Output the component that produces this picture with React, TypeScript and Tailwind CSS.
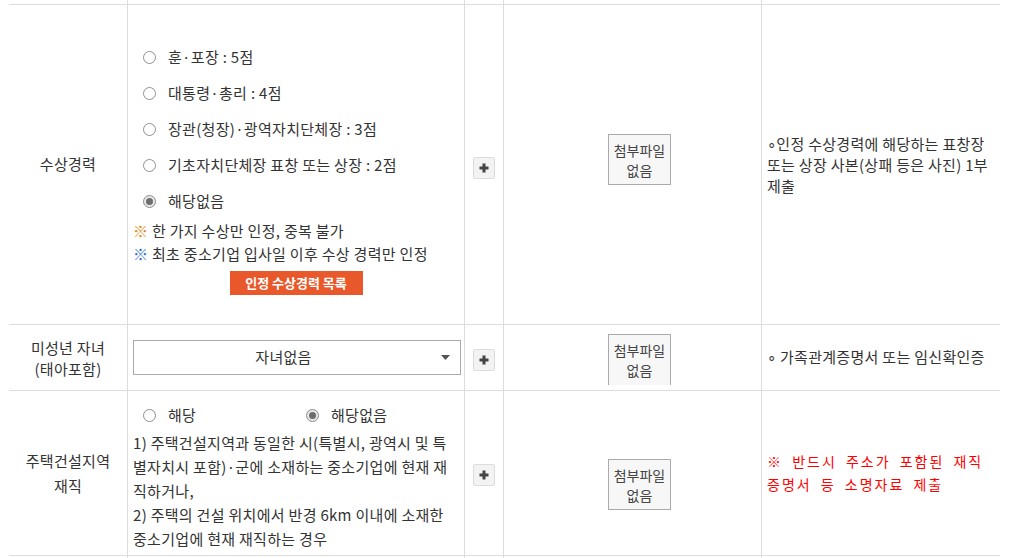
import clsx from "clsx";

const cols = "grid grid-cols-[119px_337px_39px_258px_238px]";
const cell = "border-r border-[#dddddd]";

function Radio({ checked, label, className }: { checked?: boolean; label: string; className?: string }) {
  return (
    <label className={clsx("flex items-center", className)}>
      <span
        className={clsx(
          "flex h-[13px] w-[13px] shrink-0 items-center justify-center rounded-full border",
          checked ? "border-[#8c8c8c] bg-[#e8e8e8]" : "border-[#8f8f8f] bg-white",
        )}
      >
        {checked ? <span className="h-[7px] w-[7px] rounded-full bg-[#6e6e6e]" /> : null}
      </span>
      <span className="ml-[12px]">{label}</span>
    </label>
  );
}

function PlusButton() {
  return (
    <button
      type="button"
      className="ml-[8px] flex h-[22px] w-[22px] items-center justify-center rounded-[2px] border border-[#dcdcdc] bg-[#f3f3f3]"
    >
      <svg width="10" height="10" viewBox="0 0 10 10" aria-hidden>
        <rect x="3.5" y="0.5" width="3" height="9" fill="#444" />
        <rect x="0.5" y="3.5" width="9" height="3" fill="#444" />
      </svg>
    </button>
  );
}

function NoFile({ open }: { open?: boolean }) {
  return (
    <div
      className={clsx(
        "ml-[104px] flex h-[51px] w-[63px] flex-col items-center justify-center border border-[#aaaaaa] bg-[#f7f7f7] text-[14px] leading-[20px] tracking-normal text-[#444]",
        open && "border-b-0",
      )}
    >
      <span>첨부파일</span>
      <span>없음</span>
    </div>
  );
}

function Row({ className, children }: { className: string; children: React.ReactNode }) {
  return <div className={clsx(cols, "border-b border-[#dddddd]", className)}>{children}</div>;
}

export default function App() {
  return (
    <div className="min-h-screen bg-white pl-[9px] font-[family-name:'Noto_Sans_CJK_KR','Noto_Sans',sans-serif] text-[15px] tracking-[0.3px] text-[#333]">
      <div className="w-[991px]">
        <Row className="h-[5px]">
          <div className={cell} />
          <div className={cell} />
          <div className={cell} />
          <div className={cell} />
          <div />
        </Row>

        {/* 수상경력 */}
        <Row className="h-[320px]">
          <div className={clsx(cell, "flex items-center justify-center")}>수상경력</div>
          <div className={clsx(cell, "flex flex-col pl-[5px] pt-[34px]")}>
            <div className="flex flex-col pl-[10px]">
              <Radio className="h-[36px]" label="훈·포장 : 5점" />
              <Radio className="h-[36px]" label="대통령·총리 : 4점" />
              <Radio className="h-[36px]" label="장관(청장)·광역자치단체장 : 3점" />
              <Radio className="h-[36px]" label="기초자치단체장 표창 또는 상장 : 2점" />
              <Radio className="h-[36px]" checked label="해당없음" />
            </div>
            <p className="leading-[23px]">
              <span className="text-[#e08a12]">※</span> 한 가지 수상만 인정, 중복 불가
            </p>
            <p className="leading-[23px]">
              <span className="text-[#2b6fd6]">※</span> 최초 중소기업 입사일 이후 수상 경력만 인정
            </p>
            <div className="mt-[6px] flex justify-center pr-[5px]">
              <button
                type="button"
                className="h-[24px] w-[133px] bg-[#e8582a] text-[13px] font-bold tracking-normal text-white"
              >
                인정 수상경력 목록
              </button>
            </div>
          </div>
          <div className={clsx(cell, "pt-[152px]")}>
            <PlusButton />
          </div>
          <div className={clsx(cell, "pt-[129px]")}>
            <NoFile />
          </div>
          <div className="flex items-center pl-[5px] pr-[6px] leading-[21px]">
            <p>∘인정 수상경력에 해당하는 표창장 또는 상장 사본(상패 등은 사진) 1부 제출</p>
          </div>
        </Row>

        {/* 미성년 자녀 */}
        <Row className="h-[66px]">
          <div className={clsx(cell, "flex flex-col items-center justify-center text-center leading-[21px]")}>
            <span>미성년 자녀</span>
            <span>(태아포함)</span>
          </div>
          <div className={clsx(cell, "flex items-center pl-[5px]")}>
            <div className="flex h-[35px] w-[328px] items-center border border-[#aaaaaa] bg-white">
              <span className="flex-1 pr-[8px] text-center">자녀없음</span>
              <svg className="mr-[10px]" width="9" height="5" viewBox="0 0 9 5" aria-hidden>
                <path d="M0 0h9L4.5 5z" fill="#555" />
              </svg>
            </div>
          </div>
          <div className={clsx(cell, "pt-[24px]")}>
            <PlusButton />
          </div>
          <div className={clsx(cell, "pt-[9px]")}>
            <NoFile open />
          </div>
          <div className="flex items-center pl-[5px]">
            <p>∘ 가족관계증명서 또는 임신확인증</p>
          </div>
        </Row>

        {/* 주택건설지역 재직 */}
        <Row className="h-[165px]">
          <div className={clsx(cell, "flex flex-col items-center justify-center text-center leading-[25px]")}>
            <span>주택건설지역</span>
            <span>재직</span>
          </div>
          <div className={clsx(cell, "flex flex-col pl-[5px] pt-[10px]")}>
            <div className="flex h-[28px] pl-[10px]">
              <Radio className="w-[163px]" label="해당" />
              <Radio checked label="해당없음" />
            </div>
            <p className="mt-[2px] whitespace-nowrap leading-[24px]">
              1) 주택건설지역과 동일한 시(특별시, 광역시 및 특<br />
              별자치시 포함)·군에 소재하는 중소기업에 현재 재<br />
              직하거나,<br />
              2) 주택의 건설 위치에서 반경 6km 이내에 소재한<br />
              중소기업에 현재 재직하는 경우
            </p>
          </div>
          <div className={clsx(cell, "pt-[73px]")}>
            <PlusButton />
          </div>
          <div className={clsx(cell, "pt-[68px]")}>
            <NoFile />
          </div>
          <div className="flex items-center pl-[5px]">
            <p className="whitespace-nowrap text-[14px] leading-[23px] tracking-[2px] text-[#ff0000] [word-spacing:4px]">
              ※ 반드시 주소가 포함된 재직
              <br />
              증명서 등 소명자료 제출
            </p>
          </div>
        </Row>

        <div className={clsx(cols, "h-[3px]")}>
          <div className={cell} />
          <div className={cell} />
          <div className={cell} />
          <div className={cell} />
          <div />
        </div>
      </div>
    </div>
  );
}
